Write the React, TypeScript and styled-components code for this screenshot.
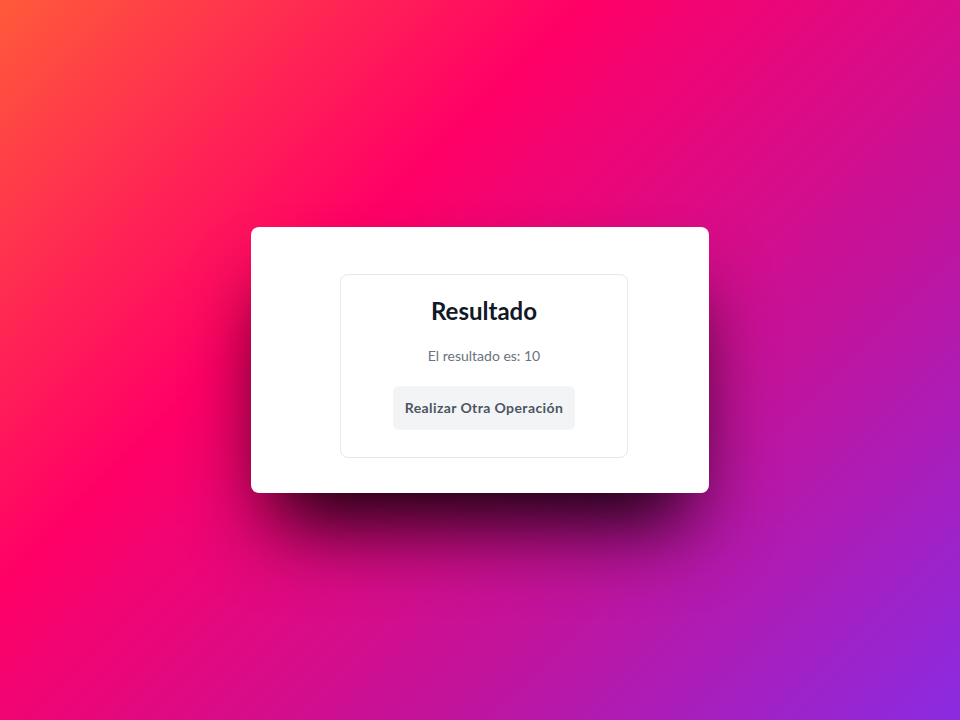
import React from "react";
import styled, { createGlobalStyle } from "styled-components";

const Global = createGlobalStyle`
  html, body { margin: 0; padding: 0; height: 100%; }
  body { font-family: Lato, "Noto Sans", sans-serif; }
  #root { height: 100%; }
`;

const Page = styled.div`
  width: 960px;
  height: 720px;
  display: flex;
  align-items: center;
  justify-content: center;
  background: linear-gradient(135deg, #ff5a3a 0%, #ff0066 35%, #c0149e 70%, #8a2be2 100%);
`;

const Card = styled.div`
  width: 458px;
  height: 266px;
  box-sizing: border-box;
  padding: 47px 81px 35px 89px;
  background: #ffffff;
  border-radius: 8px;
  box-shadow: 0 50px 80px -20px rgba(0, 0, 0, 0.95);
  display: flex;
`;

const Panel = styled.div`
  width: 288px;
  height: 184px;
  box-sizing: border-box;
  border: 1px solid #e5e7eb;
  border-radius: 8px;
  padding: 20px 24px 28px;
  display: flex;
  flex-direction: column;
  align-items: center;
`;

const Title = styled.h2`
  margin: 0 0 19px;
  font-size: 24px;
  line-height: 32px;
  font-weight: 700;
  color: #111827;
`;

const Text = styled.p`
  margin: 0 0 20px;
  font-size: 14px;
  line-height: 20px;
  color: #6b7280;
`;

const Button = styled.button`
  border: none;
  background: #f3f4f6;
  color: #4b5563;
  font-family: inherit;
  font-size: 14px;
  line-height: 20px;
  font-weight: 700;
  letter-spacing: 0.4px;
  padding: 12px 12px;
  border-radius: 6px;
  cursor: pointer;
`;

export default function App() {
  return (
    <>
      <Global />
      <Page>
        <Card>
          <Panel>
            <Title>Resultado</Title>
            <Text>El resultado es: 10</Text>
            <Button>Realizar Otra Operación</Button>
          </Panel>
        </Card>
      </Page>
    </>
  );
}
